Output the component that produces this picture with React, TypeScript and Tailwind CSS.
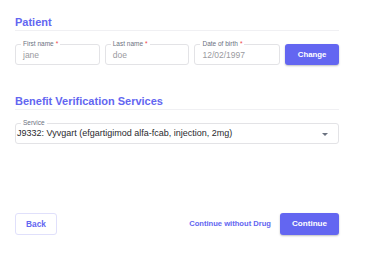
const Field = ({ label, value, required, className }: { label: string; value: string; required?: boolean; className?: string }) => (
	<div className={`relative h-[21px] rounded-[3px] border border-[#e3e3e6] ${className ?? ""}`}>
		<span className="absolute -top-[5px] left-[5px] bg-white px-[2px] text-[6.5px] leading-[8px] text-[#6b7280]">
			{label}
			{required && <span className="ml-[2px] text-[#ef4444]">*</span>}
		</span>
		<div className="flex h-full items-center px-[7px] pt-[1px] text-[8.5px] text-[#9a9aa0]">{value}</div>
	</div>
);

const App = () => {
	return (
		<div className="h-[272px] w-[370px] bg-white font-['Liberation_Sans',Arial,sans-serif]">
			<div className="w-[324px] ml-[15px] pt-[16px]">
				{/* patient */}
				<h2 className="border-b border-[#f0f0f3] pb-[1px] text-[11px] font-bold leading-[13px] text-[#6366f1]">Patient</h2>
				<div className="mt-[13px] flex gap-[5px]">
					<Field label="First name" value="jane" required className="w-[85px]" />
					<Field label="Last name" value="doe" required className="w-[85px]" />
					<Field label="Date of birth" value="12/02/1997" required className="w-[86px]" />
					<button className="h-[21px] w-[54px] rounded-[3px] bg-[#6366f1] text-[7.8px] font-bold text-white shadow-[0_1px_2px_rgba(0,0,0,0.25)]">
						Change
					</button>
				</div>

				{/* benefit verification */}
				<h2 className="mt-[30px] border-b border-[#f0f0f3] pb-[1px] text-[11px] font-bold leading-[13px] text-[#6366f1]">
					Benefit Verification Services
				</h2>
				<div className="relative mt-[13px] h-[21px] rounded-[3px] border border-[#e3e3e6]">
					<span className="absolute -top-[5px] left-[5px] bg-white px-[2px] text-[6.5px] leading-[8px] text-[#6b7280]">Service</span>
					<div className="flex h-full items-center justify-between pl-[1px] pr-[10px] pt-[1px] text-[9px] text-[#2a2a2e]">
						<span>J9332: Vyvgart (efgartigimod alfa-fcab, injection, 2mg)</span>
						<svg width="6" height="3" viewBox="0 0 6 3"><path d="M0 0h6L3 3z" fill="#6b7280" /></svg>
					</div>
				</div>

				{/* footer */}
				<div className="mt-[69px] flex items-center">
					<button className="h-[22px] w-[42px] rounded-[3px] border border-[#e0e0fb] bg-white text-[8.3px] font-bold text-[#6366f1]">
						Back
					</button>
					<div className="ml-auto flex items-center gap-[9px]">
						<button className="text-[7.6px] font-bold text-[#6366f1]">Continue without Drug</button>
						<button className="h-[22px] w-[59px] rounded-[3px] bg-[#6366f1] text-[8.1px] font-bold text-white shadow-[0_1px_2px_rgba(0,0,0,0.25)]">
							Continue
						</button>
					</div>
				</div>
			</div>
		</div>
	);
};

export default App;
